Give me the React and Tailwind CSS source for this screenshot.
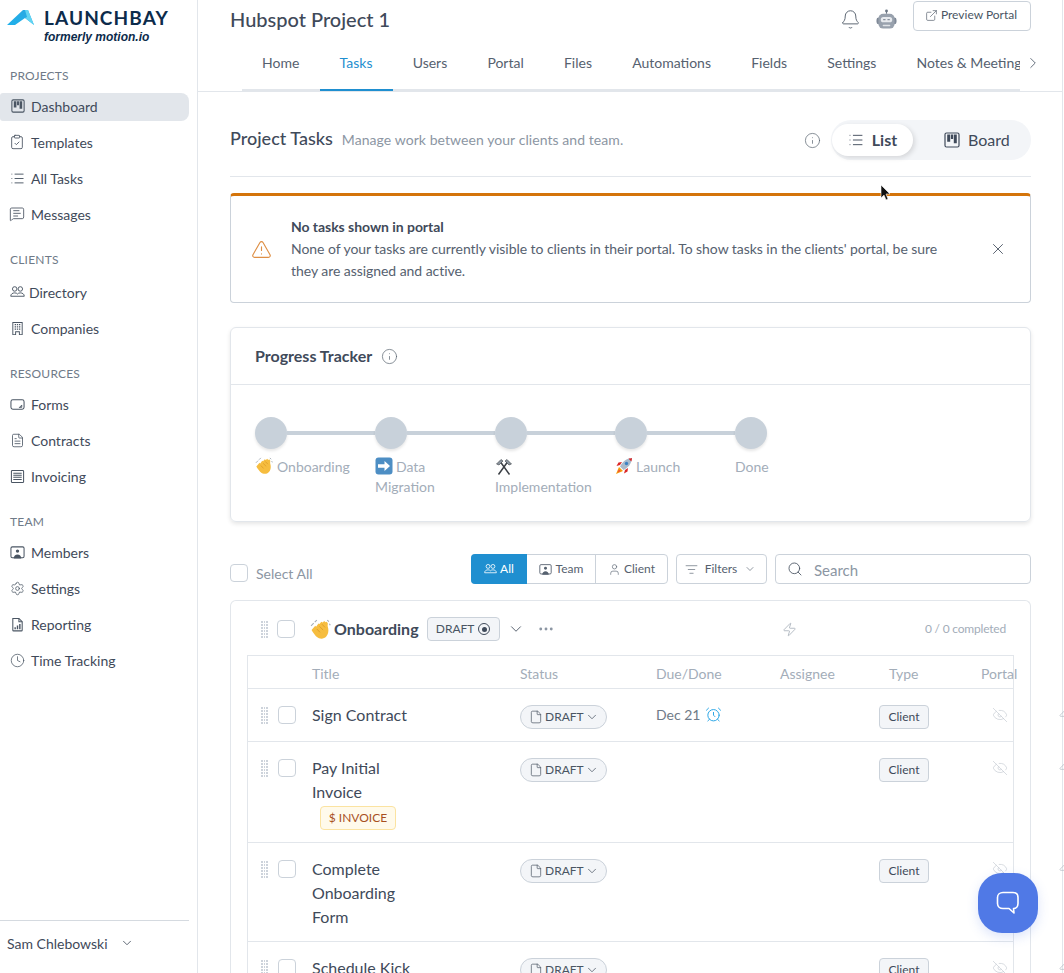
import React from "react";
import {
  ClipboardCheck,
  List,
  MessageSquareText,
  FileText,
  Settings,
  Clock,
  Bell,
  ExternalLink,
  ChevronRight,
  ChevronDown,
  Info,
  X,
  TriangleAlert,
  Search,
  Ellipsis,
  Zap,
  EyeOff,
  User,
  ListFilter,
  File,
  AlarmClock,
} from "lucide-react";

const Kanban = ({ className }) => (
  <svg viewBox="0 0 16 16" className={className} fill="none">
    <rect x="1" y="1" width="14" height="14" rx="1.5" stroke="currentColor" strokeWidth="1.2" />
    <path d="M3.2 2.6h3v7.2h-3zM6.9 2.6h2.2v4.4H6.9zM9.8 2.6h3v8.6h-3z" fill="currentColor" />
  </svg>
);

const People = ({ className }) => (
  <svg viewBox="0 0 16 16" className={className} fill="none" stroke="currentColor" strokeWidth="1">
    <circle cx="5" cy="4.2" r="2.4" />
    <circle cx="11" cy="4.2" r="2.4" />
    <path d="M.8 12c0-2.4 2-3.6 4.2-3.6 1.5 0 2.4.5 3 1.2.6-.7 1.5-1.2 3-1.2 2.2 0 4.2 1.2 4.2 3.6H.8z" />
  </svg>
);

const Building = ({ className }) => (
  <svg viewBox="0 0 16 16" className={className} fill="currentColor">
    <path d="M2.5 1h11v14h-4v-3h-3v3h-4V1zm1 1v12h2v-3h5v3h2V2h-9z" />
    <path d="M5 3.2h1.4v1.4H5zM7.3 3.2h1.4v1.4H7.3zM9.6 3.2H11v1.4H9.6zM5 5.6h1.4V7H5zM7.3 5.6h1.4V7H7.3zM9.6 5.6H11V7H9.6zM5 8h1.4v1.4H5zM7.3 8h1.4v1.4H7.3zM9.6 8H11v1.4H9.6z" />
  </svg>
);

const FormIcon = ({ className }) => (
  <svg viewBox="0 0 16 16" className={className} fill="none" stroke="currentColor" strokeWidth="1.1">
    <rect x="1" y="3" width="14" height="10" rx="2" />
    <path d="M9.5 11h3V8.5" strokeWidth="1" />
    <path d="M12.5 8.5 10.5 11" strokeWidth="0.8" />
  </svg>
);

const InvoiceIcon = ({ className }) => (
  <svg viewBox="0 0 16 16" className={className} fill="none" stroke="currentColor" strokeWidth="1.1">
    <rect x="1.5" y="1.5" width="13" height="13" rx="1" />
    <path d="M3.5 4.5h9M3.5 6.7h9M3.5 8.9h9M3.5 11.1h9" />
  </svg>
);

const MemberIcon = ({ className }) => (
  <svg viewBox="0 0 16 16" className={className}>
    <rect x="1" y="2" width="14" height="11.5" rx="1.5" fill="none" stroke="currentColor" strokeWidth="1.1" />
    <circle cx="8" cy="6.5" r="1.8" fill="currentColor" />
    <path d="M4 14.5c0-3 1.8-4.5 4-4.5s4 1.5 4 4.5z" fill="currentColor" />
  </svg>
);

const ReportIcon = ({ className }) => (
  <svg viewBox="0 0 16 16" className={className} fill="none" stroke="currentColor" strokeWidth="1.1">
    <path d="M3 1.5h6.5L13 5v9a.8.8 0 0 1-.8.8H3.8A.8.8 0 0 1 3 14z" />
    <path d="M9.5 1.5V5H13" />
    <path d="M5.5 13v-2M8 13V9M10.5 13V7.5" strokeWidth="1.5" />
  </svg>
);

const Robot = ({ className }) => (
  <svg viewBox="0 0 22 22" className={className}>
    <circle cx="11" cy="2" r="1.5" fill="#6b7684" />
    <path d="M11 3v2" stroke="#6b7684" strokeWidth="1.2" />
    <rect x=".5" y="9" width="21" height="7" rx="2.5" fill="#7f8997" />
    <rect x="2.5" y="5" width="17" height="15.5" rx="5" fill="#98a1ad" />
    <rect x="5" y="8.5" width="12" height="5.5" rx="2.7" fill="#e7eaee" />
    <path d="M7.5 11.2h2.5M12 11.2h2.5" stroke="#6b7684" strokeWidth="1" />
    <rect x="7" y="16.5" width="8" height="1.5" rx=".7" fill="#dfe3e7" />
  </svg>
);

const Rocket = () => (
  <svg viewBox="0 0 18 18" className="h-[18px] w-[18px] inline-block align-[-3px] mr-[3px]">
    <path d="M1 17l3-7 4 4z" fill="#f59e0b" />
    <path d="M2.5 15.500l1.500-3 1.500 1.500z" fill="#ef4444" />
    <path d="M5 8l-3.500 1 2-3.500 3.500-.5zM10 13l-1 3.500 3.500-2 .5-3.500z" fill="#dc2626" />
    <path d="M5 9.500C7.500 4.500 11.500 1.500 17 1c-.5 5.500-3.500 9.500-8.500 12z" fill="#a9bacb" />
    <circle cx="11.500" cy="6.500" r="1.700" fill="#3b82c4" />
    <path d="M13.500 1.700c1 0 2.800-.6 3.500-.7-.1.800-.4 2.500-.6 3.500z" fill="#dc2626" />
  </svg>
);

const Wave = ({ className }) => (
  <svg viewBox="0 0 20 20" className={className}>
    <path d="M1.500 10.500 5 6.500l.8.8L8 4.200l1 .6 1.800-2.300 1.300.8L13.500 2l1.300 1.200 1-.6 1.200 1.500-.2 2.500.6 2.800c.4 2.700-.2 5.400-1.900 7.300-1.800 2-4.500 2.500-7 1.600-2.200-.8-3.600-2.800-5-4.700-.6-.9-1.500-1.800-2-3.100z" fill="#f6bd3f" />
    <path d="M1 6.500 3.500 4M4.500 3 6.500 1M16.500 1l1.500 1.500M18.500 4.500l.8 1.500" stroke="#a3acb6" strokeWidth="1" fill="none" />
    <path d="M6.500 9.500l3 3.200M9 7l3.500 3.500M11.500 5l2.800 3" stroke="#dd9c28" strokeWidth=".9" fill="none" />
  </svg>
);

const ArrowBox = () => (
  <svg viewBox="0 0 18 18" className="h-[18px] w-[18px] inline-block align-[-3px] mr-[3px]">
    <rect x=".5" y=".5" width="17" height="17" rx="3" fill="#4d8ec4" />
    <path d="M3 7.200h6.500V4L15 9l-5.500 5v-3.200H3z" fill="#fff" />
  </svg>
);

const Hammers = () => (
  <div className="h-5 flex items-center">
    <svg viewBox="0 0 18 18" className="h-[18px] w-[18px] block" fill="none">
      <path d="M3.500 16.500 12.500 4M14.500 16.500 5.500 4" stroke="#3b3f45" strokeWidth="1.500" />
      <path d="M1.500 6 6 1.500 8 3 4 7zM16.500 6 12 1.500 10 3l4 4z" fill="#8b949e" stroke="#3b3f45" strokeWidth=".6" />
    </svg>
  </div>
);

const DragDots = ({ className }) => (
  <div className={`grid grid-cols-3 gap-x-px gap-y-px w-[7px] ${className}`}>
    {Array.from({ length: 18 }).map((_, i) => (
      <span key={i} className="h-[2px] w-[1.5px] bg-[#cdd3db]" />
    ))}
  </div>
);

const navGroups = [
  {
    label: "Projects",
    items: [
      { name: "Dashboard", icon: <Kanban className="h-[14px] w-[14px]" />, active: true },
      { name: "Templates", icon: <ClipboardCheck strokeWidth={1.3} className="h-4 w-4 -ml-px" /> },
      { name: "All Tasks", icon: <List strokeWidth={1.5} className="h-[15px] w-[15px]" /> },
      { name: "Messages", icon: <MessageSquareText strokeWidth={1.3} className="h-4 w-4 -ml-px" /> },
    ],
  },
  {
    label: "Clients",
    items: [
      { name: "Directory", icon: <People className="h-[15px] w-[15px]" />, shift: true },
      { name: "Companies", icon: <Building className="h-[15px] w-[15px]" /> },
    ],
  },
  {
    label: "Resources",
    items: [
      { name: "Forms", icon: <FormIcon className="h-[15px] w-[15px]" /> },
      { name: "Contracts", icon: <FileText strokeWidth={1.3} className="h-[15px] w-[15px]" /> },
      { name: "Invoicing", icon: <InvoiceIcon className="h-[15px] w-[15px]" /> },
    ],
  },
  {
    label: "Team",
    items: [
      { name: "Members", icon: <MemberIcon className="h-[15px] w-[15px]" /> },
      { name: "Settings", icon: <Settings strokeWidth={1.2} className="h-[15px] w-[15px]" /> },
      { name: "Reporting", icon: <ReportIcon className="h-[15px] w-[15px]" /> },
      { name: "Time Tracking", icon: <Clock strokeWidth={1.2} className="h-[15px] w-[15px]" /> },
    ],
  },
];

const tabs = ["Home", "Tasks", "Users", "Portal", "Files", "Automations", "Fields", "Settings", "Notes & Meetings"];

const steps = [
  { icon: <Wave className="h-[18px] w-[18px] inline-block align-[-3px] mr-[4px]" />, text: "Onboarding" },
  { icon: <ArrowBox />, text: "Data Migration" },
  { icon: <Hammers />, text: "Implementation" },
  { icon: <Rocket />, text: "Launch" },
  { icon: null, text: "Done" },
];

const tasks = [
  { title: ["Sign Contract"], due: "Dec 21" },
  { title: ["Pay Initial", "Invoice"], invoice: true },
  { title: ["Complete", "Onboarding", "Form"] },
  { title: ["Schedule Kick"] },
];

const Sidebar = () => (
  <aside className="w-[198px] shrink-0 h-full flex flex-col border-r border-[#e2e6eb]">
    <div className="h-[68px] relative shrink-0">
      <svg viewBox="0 0 29 17" className="absolute left-[6px] top-[9px] w-[29px] h-[17px]">
        <defs>
          <linearGradient id="roof" x1="0" y1="1" x2="1" y2="0">
            <stop offset="0" stopColor="#1fb0ea" />
            <stop offset="1" stopColor="#2aa8e2" />
          </linearGradient>
        </defs>
        <path d="M1 16h8l10-7 9 7-6-15h-5z" fill="url(#roof)" />
        <path d="M19 1h3l6 15-9-7 2-1z" fill="#62d4f2" />
      </svg>
      <div className="absolute left-[44px] top-[6px] text-[19px] leading-6 font-bold tracking-[1.1px] text-[#0c2b4b]">
        LAUNCHBAY
      </div>
      <div className="absolute left-[44px] top-[29px] text-[12px] leading-4 font-bold italic text-[#0c2b4b] font-['Liberation_Sans',sans-serif]">
        formerly motion.io
      </div>
    </div>
    <nav className="flex-1 pr-2">
      {navGroups.map((group, g) => (
        <div key={group.label} className={g > 0 ? "mt-[23px]" : ""}>
          <div className="h-4 mb-[9px] pl-[10px] text-[12px] leading-4 uppercase tracking-[0.2px] text-[#6f7a88]">
            {group.label}
          </div>
          {group.items.map((item) => (
            <div
              key={item.name}
              className={`h-7 mb-2 pb-[2px] flex items-center pl-[10px] rounded-r-lg rounded-l-[3px] text-[14px] text-[#3f4a5a] ${
                item.active ? "bg-[#e2e6eb]" : ""
              } ${item.shift ? "mt-[11px] gap-[4px]" : "gap-[6px]"}`}
            >
              <span className="w-[15px] flex justify-center text-[#4a5563]">{item.icon}</span>
              <span>{item.name}</span>
            </div>
          ))}
        </div>
      ))}
    </nav>
    <div className="h-[53px] mr-2 pb-[8px] border-t border-[#d5dae0] flex items-center pl-[7px] text-[14px] text-[#3f4a5a] shrink-0">
      Sam Chlebowski
      <ChevronDown strokeWidth={1.5} className="h-[14px] w-[14px] ml-[12px] text-[#4a5563]" />
    </div>
  </aside>
);

const Header = () => (
  <header className="h-[92px] shrink-0 border-b border-[#e2e6eb] relative">
    <div className="h-[40px] pl-[32px] pr-[31px] flex items-start justify-between">
      <h1 className="text-[20px] leading-[28px] mt-[5px] font-medium text-[#3f4a5a]">Hubspot Project 1</h1>
      <div className="flex items-center">
        <Bell strokeWidth={1.1} className="h-[21px] w-[21px] text-[#58636f] mt-[8px]" />
        <Robot className="h-[21px] w-[21px] ml-[15px] mt-[8px]" />
        <button className="ml-[16px] mt-[1px] h-[30px] w-[118px] pr-[2px] pb-[2px] rounded border border-[#cbd2da] flex items-center justify-center gap-[3px] text-[12px] text-[#4a5563]">
          <ExternalLink strokeWidth={1.2} className="h-[13px] w-[13px]" />
          Preview Portal
        </button>
      </div>
    </div>
    <div className="flex items-center pl-[44px] pr-[10px]">
      <div className="w-[778px] flex overflow-hidden h-[51px] -mb-px">
        {tabs.map((t) => (
          <div
            key={t}
            className={`px-[20.1px] h-[51px] flex items-center pb-[5px] whitespace-nowrap shrink-0 text-[14px] border-b-2 ${
              t === "Tasks" ? "text-[#1f8fd0] border-[#1f8fd0]" : "text-[#56616f] border-[#e2e6eb]"
            }`}
          >
            {t}
          </div>
        ))}
      </div>
      <ChevronRight strokeWidth={1.2} className="h-[18px] w-[18px] ml-[4px] -mt-[5px] text-[#56616f]" />
    </div>
  </header>
);

const SectionHead = () => (
  <div className="pt-[28px] pb-4 border-b border-[#e2e6eb] flex items-center">
    <h2 className="text-[18px] font-medium text-[#3f4a5a] -mt-[3px]">Project Tasks</h2>
    <span className="ml-[9px] -mt-px text-[14px] tracking-[0.07px] text-[#8c96a3]">
      Manage work between your clients and team.
    </span>
    <Info strokeWidth={1} className="ml-auto h-[17px] w-[17px] text-[#58636f]" />
    <div className="ml-[10px] w-[200px] h-10 rounded-full bg-[#f3f5f8] flex items-center pl-[1px]">
      <div className="h-8 w-[81px] rounded-full bg-white shadow-[2px_2px_5px_rgba(0,0,0,0.12)] flex items-center justify-center gap-[8px] text-[16px] font-bold text-[#3f4a5a]">
        <List strokeWidth={1.4} className="h-4 w-4" />
        List
      </div>
      <div className="ml-[31px] flex items-center gap-[8px] text-[16px] text-[#3f4a5a]">
        <Kanban className="h-4 w-4" />
        Board
      </div>
    </div>
  </div>
);

const Alert = () => (
  <div className="mt-4 h-[110px] rounded border border-[#cbd2da] border-t-[3px] border-t-[#d4740a] flex items-center">
    <TriangleAlert strokeWidth={1.3} className="ml-[20px] h-[21px] w-[21px] text-[#de8f45]" />
    <div className="ml-[19px] w-[670px] text-[14px] leading-[22px] text-[#56616f] tracking-[-0.05px]">
      <div className="font-bold text-[#3f4a5a]">No tasks shown in portal</div>
      None of your tasks are currently visible to clients in their portal. To show tasks in the clients' portal, be
      sure they are assigned and active.
    </div>
    <X strokeWidth={1.2} className="ml-auto mr-[23px] h-[18px] w-[18px] text-[#4a5563]" />
  </div>
);

const ProgressTracker = () => (
  <div className="mt-6 h-[195px] rounded-md border border-[#e2e6eb] shadow-[0_2px_4px_rgba(0,0,0,0.1)]">
    <div className="h-[57px] border-b border-[#e2e6eb] pl-[24px] flex items-center gap-[9px]">
      <span className="text-[16px] font-bold text-[#3f4a5a]">Progress Tracker</span>
      <Info strokeWidth={1} className="h-[17px] w-[17px] text-[#58636f]" />
    </div>
    <div className="pl-[24px] pt-[32px] flex">
      {steps.map((s, i) => (
        <div key={s.text} className="w-[120px] shrink-0">
          <div className="flex items-center h-8">
            <div className="h-8 w-8 rounded-full bg-[#c8d1da] shadow-[0_2px_3px_rgba(0,0,0,0.1)] shrink-0" />
            {i < steps.length - 1 && <div className="h-1 w-[88px] bg-[#c8d1da] shrink-0" />}
          </div>
          <div className="mt-[8px] w-[100px] text-[14px] leading-5 text-[#a3adb9]">
            {s.icon}
            {s.text}
          </div>
        </div>
      ))}
    </div>
  </div>
);

const Toolbar = () => (
  <div className="mt-8 h-[30px] flex items-center text-[12px] text-[#56616f]">
    <div className="h-[18px] w-[18px] mt-[8px] rounded-sm border border-[#cbd2da]" />
    <span className="ml-2 mt-[8px] text-[14px] text-[#8c96a3]">Select All</span>
    <div className="ml-auto h-[30px] w-[197px] flex rounded border border-[#cbd2da]">
      <div className="w-[56px] -my-px -ml-px rounded-l bg-[#1f8fd0] text-white flex items-center justify-center gap-[3px]">
        <People className="h-[13px] w-[13px]" />
        All
      </div>
      <div className="w-[69px] border-r border-[#cbd2da] flex items-center justify-center gap-[4px]">
        <MemberIcon className="h-[13px] w-[13px]" />
        Team
      </div>
      <div className="flex-1 flex items-center justify-center gap-[3px]">
        <User strokeWidth={1.2} className="h-[13px] w-[13px]" />
        Client
      </div>
    </div>
    <div className="ml-2 h-[30px] w-[91px] pr-[2px] rounded border border-[#cbd2da] flex items-center justify-center">
      <ListFilter strokeWidth={1.2} className="h-[13px] w-[13px]" />
      <span className="ml-[7px]">Filters</span>
      <ChevronDown strokeWidth={1.3} className="ml-[7px] h-3 w-3" />
    </div>
    <div className="ml-2 h-[30px] w-[256px] rounded border border-[#cbd2da] flex items-center pl-[11px] text-[15px] text-[#8c96a3]">
      <Search strokeWidth={1.3} className="h-4 w-4 text-[#4a5563]" />
      <span className="ml-[11px] mt-[2px]">Search</span>
    </div>
  </div>
);

const TaskRow = ({ task }) => (
  <div className="grid grid-cols-[64px_208px_136px_124px_99px_102px_77px] border-b border-[#e2e6eb] min-h-[53px] pt-[14px] pb-[12px]">
    <div className="pl-[13px] pt-[3px] flex items-start gap-[10px]">
      <DragDots className="mt-[1px]" />
      <div className="h-[18px] w-[18px] rounded-sm border border-[#cbd2da] shrink-0" />
    </div>
    <div className="text-[16px] leading-6 text-[#3f4a5a]">
      {task.title.map((l) => (
        <div key={l}>{l}</div>
      ))}
      {task.invoice && (
        <div className="mt-[2px] ml-[8px] h-6 w-[76px] rounded-sm border border-[#fbe3a1] bg-[#fffaeb] flex items-center justify-center text-[12px] text-[#a8501e]">
          $ INVOICE
        </div>
      )}
    </div>
    <div className="pt-[2px]">
      <div className="h-6 w-[87px] rounded-full border border-[#cbd2da] bg-[#f3f5f8] flex items-center pl-[8px] text-[12px] text-[#4a5563]">
        <File strokeWidth={1.2} className="h-[14px] w-[14px] mr-[2px]" />
        DRAFT
        <ChevronDown strokeWidth={1.3} className="h-[14px] w-[14px] ml-[1px]" />
      </div>
    </div>
    <div className="pt-[2px] flex items-start text-[14px] leading-5 text-[#6f7a88]">
      {task.due && (
        <>
          {task.due}
          <AlarmClock strokeWidth={1.4} className="ml-[5px] mt-[1px] h-[17px] w-[17px] text-[#2ba6e6]" />
        </>
      )}
    </div>
    <div />
    <div className="pt-[2px]">
      <div className="h-6 w-[50px] rounded border border-[#cbd2da] bg-[#f3f5f8] flex items-center justify-center text-[12px] text-[#3f4a5a]">
        Client
      </div>
    </div>
    <div className="pt-[4px] pl-[11px] flex items-start">
      <EyeOff strokeWidth={1} className="h-4 w-4 text-[#c4cad2] shrink-0" />
      <Zap strokeWidth={1} className="ml-[50px] h-4 w-4 text-[#aeb6c0] shrink-0" />
    </div>
  </div>
);

const TaskGroup = () => (
  <div className="mt-4 rounded-t-md border border-[#e2e6eb] border-b-0 pb-10">
    <div className="h-[54px] pt-[2px] pl-[30px] pr-[24px] flex items-center">
      <DragDots />
      <div className="ml-[9px] h-[18px] w-[18px] rounded-sm border border-[#cbd2da]" />
      <Wave className="ml-[15px] h-[21px] w-[21px]" />
      <span className="ml-[3px] text-[16px] font-bold text-[#3f4a5a]">Onboarding</span>
      <div className="ml-[8px] h-6 w-[73px] rounded border border-[#cbd2da] bg-[#f3f5f8] flex items-center justify-center gap-[4px] text-[12px] text-[#4a5563]">
        DRAFT
        <span className="h-3 w-3 rounded-full border border-[#3f4a5a] flex items-center justify-center">
          <span className="h-[5px] w-[5px] rounded-full bg-[#3f4a5a]" />
        </span>
      </div>
      <ChevronDown strokeWidth={1.2} className="ml-[7px] h-[18px] w-[18px] text-[#4a5563]" />
      <Ellipsis strokeWidth={1.8} className="ml-[12px] h-[18px] w-[18px] text-[#8c96a3]" />
      <Zap strokeWidth={1} className="ml-[227px] h-[15px] w-[15px] text-[#8c96a3]" />
      <span className="ml-auto text-[12px] tracking-[-0.2px] text-[#a3adb9]">0 / 0 completed</span>
    </div>
    <div className="mx-4 border-x border-t border-[#e2e6eb]">
      <div className="grid grid-cols-[64px_208px_136px_124px_99px_102px_77px] h-[33px] pt-[2px] items-center border-b border-[#e2e6eb] text-[14px] text-[#a3adb9]">
        <div />
        <div>Title</div>
        <div>Status</div>
        <div>Due/Done</div>
        <div>Assignee</div>
        <div className="pl-[10px]">Type</div>
        <div>Portal</div>
      </div>
      {tasks.map((t) => (
        <TaskRow key={t.title[0]} task={t} />
      ))}
    </div>
  </div>
);

export default function App() {
  return (
    <div className="relative h-screen w-full overflow-hidden flex bg-white font-['Lato',sans-serif]">
      <Sidebar />
      <main className="flex-1 min-w-0 mr-px border-r border-[#e2e6eb] flex flex-col">
        <Header />
        <div className="pl-[32px] pr-[31px]">
          <SectionHead />
          <Alert />
          <ProgressTracker />
          <Toolbar />
          <TaskGroup />
        </div>
      </main>
      <div className="absolute left-[978px] top-[873px] h-[60px] w-[60px] rounded-[24px] bg-[#5079e6] shadow-[0_4px_12px_rgba(80,121,230,0.2)] flex items-center justify-center">
        <svg viewBox="0 0 26 26" className="h-[26px] w-[26px]" fill="none" stroke="#fff" strokeWidth="1.6">
          <path d="M8 2.500h10c3 0 5 2 5 5v6c0 3-2 5-4.500 5l.5 4.500-5-4.500H8c-3 0-5.500-2-5.500-5v-6c0-3 2.500-5 5.500-5z" strokeLinejoin="round" />
        </svg>
      </div>
      <svg viewBox="0 0 12 18" className="absolute left-[880px] top-[184px] h-[18px] w-[12px]">
        <path d="M1 1v13l3-3 2 5 2-1-2-5h4z" fill="#111" stroke="#fff" strokeWidth=".6" />
      </svg>
    </div>
  );
}
